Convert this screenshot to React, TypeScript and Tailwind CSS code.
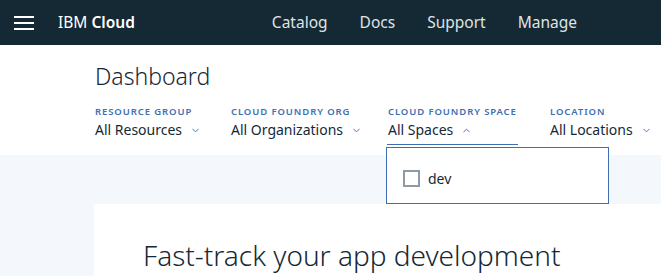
import { ChevronDown, ChevronUp } from "lucide-react";

const filters = [
  { label: "Resource Group", value: "All Resources", w: "w-[136px]" },
  { label: "Cloud Foundry Org", value: "All Organizations", w: "w-[157px]" },
  { label: "Cloud Foundry Space", value: "All Spaces", w: "w-[162px]", open: true },
  { label: "Location", value: "All Locations", w: "w-[140px]" },
];

export default function App() {
  return (
    <div className="h-[276px] w-[661px] overflow-hidden bg-[#f4f7fb] font-['Noto_Sans',sans-serif] text-[#152935]">
      {/* top bar */}
      <header className="flex h-[45px] items-center bg-[#152935] text-white">
        <div className="ml-[14px] flex w-[20px] flex-col gap-[4px]">
          <span className="h-[2px] bg-white" />
          <span className="h-[2px] bg-white" />
          <span className="h-[2px] bg-white" />
        </div>
        <div className="ml-[24px] text-[15.5px]">
          IBM <span className="font-semibold">Cloud</span>
        </div>
        <nav className="ml-[137px] flex gap-[32px] text-[15.5px] text-[#dfe3e6]">
          <span>Catalog</span>
          <span>Docs</span>
          <span>Support</span>
          <span>Manage</span>
        </nav>
      </header>

      {/* dashboard heading + filters */}
      <section className="h-[110px] bg-white pl-[95px] pt-[14px]">
        <h1 className="text-[23px] font-light leading-[34px]">Dashboard</h1>
        <div className="mt-[13px] flex">
          {filters.map((f) => (
            <div key={f.label} className={`relative shrink-0 ${f.w}`}>
              <div className="text-[9.5px] font-semibold uppercase leading-[12px] tracking-[0.9px] text-[#3d70b2]">
                {f.label}
              </div>
              <div
                className={`mt-[2px] flex items-center gap-[8px] pb-[4px] text-[14px] leading-[20px] ${
                  f.open ? "-ml-[1px] w-[131px] border-b border-[#3d70b2] pl-[1px]" : ""
                }`}
              >
                {f.value}
                {f.open ? (
                  <ChevronUp size={11} strokeWidth={2} className="text-[#3d70b2]" />
                ) : (
                  <ChevronDown size={11} strokeWidth={2} className="text-[#3d70b2]" />
                )}
              </div>
              {f.open && (
                <div className="absolute left-[-2px] top-[41px] z-10 h-[57px] w-[223px] border border-[#3d70b2] bg-white">
                  <label className="ml-[16px] mt-[22px] flex items-center gap-[8px] text-[14px] leading-[16px]">
                    <span className="h-[17px] w-[17px] border-2 border-[#8c9ba5] bg-white" />
                    dev
                  </label>
                </div>
              )}
            </div>
          ))}
        </div>
      </section>

      {/* content card */}
      <section className="pt-[49px]">
        <div className="ml-[94px] h-[100px] bg-white pl-[49px] pt-[33px]">
          <h2 className="text-[28px] font-light leading-[36px]">Fast-track your app development</h2>
        </div>
      </section>
    </div>
  );
}
